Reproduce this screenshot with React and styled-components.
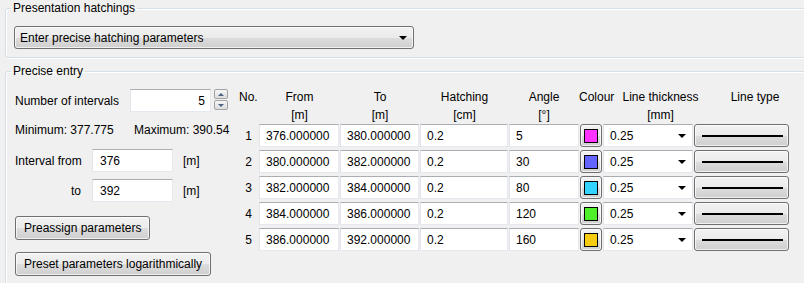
import React from 'react';
import styled, { createGlobalStyle, css } from 'styled-components';

const GlobalStyle = createGlobalStyle`
  html, body {
    margin: 0;
    padding: 0;
    background: #f0f0f0;
    overflow: hidden;
  }
  body {
    font-family: "Liberation Sans", Arial, sans-serif;
    font-size: 12px;
    color: #000;
  }
`

const Page = styled.div`
  width: 820px;
  height: 283px;
  padding-left: 5px;
  overflow: hidden;
`

const GroupBox = styled.fieldset`
  margin: ${p => p.$top || 0}px 0 0 0;
  padding: 0 0 ${p => p.$bottom || 0}px 5px;
  border: 1px solid #d5dfe5;
  border-radius: 3px;
  box-shadow: inset 1px 1px 0 #fff, 1px 1px 0 #fff;
  min-width: 0;
  height: ${p => p.$height ? p.$height + 'px' : 'auto'};
  box-sizing: border-box;
`

const Legend = styled.legend`
  padding: 0 2px;
  line-height: 16px;
  height: 16px;
`

const buttonFace = css`
  border: 1px solid #707070;
  border-radius: 3px;
  background: linear-gradient(#f2f2f2 0%, #ebebeb 50%, #dddddd 51%, #cfcfcf 100%);
  box-shadow: inset 0 0 0 1px rgba(255,255,255,0.7);
  box-sizing: border-box;
`

const Combo = styled.div`
  ${buttonFace}
  margin: 10px 0 0 3px;
  width: 400px;
  height: 23px;
  display: flex;
  align-items: center;
  justify-content: space-between;
  padding: 0 6px 0 5px;
`

const Arrow = styled.span`
  width: 0;
  height: 0;
  border-left: 4px solid transparent;
  border-right: 4px solid transparent;
  border-top: 4px solid #000;
`

const Body = styled.div`
  display: flex;
  padding-top: 9px;
  gap: 4px;
`

const LeftPanel = styled.div`
  width: 220px;
  padding-left: 4px;
  box-sizing: border-box;
  display: flex;
  flex-direction: column;
`

const FormRow = styled.div`
  display: flex;
  align-items: center;
  height: ${p => p.$h || 23}px;
  margin-top: ${p => p.$mt || 0}px;
`

const Label = styled.span`
  width: ${p => p.$w}px;
  padding-left: ${p => p.$pl || 0}px;
  box-sizing: border-box;
  flex-shrink: 0;
  white-space: nowrap;
`

const TextBox = styled.div`
  width: ${p => p.$w || 81}px;
  height: 23px;
  box-sizing: border-box;
  background: #fff;
  border: 1px solid #e3e9ef;
  border-top-color: #abadb3;
  border-left-color: #e2e3ea;
  display: flex;
  align-items: center;
  justify-content: ${p => p.$right ? 'flex-end' : 'flex-start'};
  padding: 0 ${p => p.$right ? 5 : 4}px 0 ${p => p.$right ? 0 : 7}px;
  flex-shrink: 0;
`

const Unit = styled.span`
  margin-left: 10px;
`

const Spinner = styled.div`
  display: flex;
  flex-direction: column;
  gap: 1px;
  margin-left: 3px;
  align-self: flex-start;
`

const SpinButton = styled.div`
  width: 14px;
  height: 10px;
  box-sizing: border-box;
  border: 1px solid #a3a3a3;
  border-radius: 2px;
  background: linear-gradient(#f6f6f6, #dcdcdc);
  display: flex;
  align-items: center;
  justify-content: center;
  &::after {
    content: "";
    border-left: 3px solid transparent;
    border-right: 3px solid transparent;
    ${p => p.$up ? 'border-bottom: 3px solid #4d6185;' : 'border-top: 3px solid #4d6185;'}
  }
`

const Stat = styled.span`
  width: ${p => p.$w}px;
  white-space: nowrap;
`

const PushButton = styled.div`
  ${buttonFace}
  height: 24px;
  display: inline-flex;
  align-items: center;
  padding: 0 8px;
  align-self: flex-start;
  margin-top: ${p => p.$mt}px;
  white-space: nowrap;
`

const Table = styled.div`
  display: flex;
  flex-direction: column;
`

const HeaderRow = styled.div`
  display: grid;
  grid-template-columns: 24px 81px 80px 89px 70px 40px 83px 106px;
  height: 36px;
  line-height: 18px;
`

const HeaderCell = styled.div`
  text-align: ${p => p.$align || 'center'};
  white-space: nowrap;
  padding-left: ${p => p.$pl || 0}px;
`

const Rows = styled.div`
  display: flex;
  flex-direction: column;
  gap: 3px;
`

const DataRow = styled.div`
  display: grid;
  grid-template-columns: 23px 80px 79px 88px 70px 22px 90px 95px;
  column-gap: 1px;
  height: 23px;
`

const RowNo = styled.div`
  display: flex;
  align-items: center;
  justify-content: center;
  padding-left: 4px;
`

const Cell = styled.div`
  box-sizing: border-box;
  background: #fff;
  border: 1px solid #e3e9ef;
  border-top-color: #abadb3;
  border-left-color: #e2e3ea;
  display: flex;
  align-items: center;
  padding-left: 6px;
`

const ColourButton = styled.div`
  ${buttonFace}
  display: flex;
  align-items: center;
  justify-content: center;
`

const Swatch = styled.span`
  width: 14px;
  height: 14px;
  box-sizing: border-box;
  border: 1px solid #000;
  background: ${p => p.$c};
`

const ThicknessCell = styled(Cell)`
  justify-content: space-between;
  padding-right: 6px;
`

const LineButton = styled.div`
  ${buttonFace}
  display: flex;
  align-items: center;
  justify-content: center;
  &::after {
    content: "";
    width: 81px;
    height: 2px;
    background: #000;
    margin-left: 1px;
  }
`

const rows = [
  { from: '376.000000', to: '380.000000', angle: '5', colour: '#ff33ff' },
  { from: '380.000000', to: '382.000000', angle: '30', colour: '#6464ff' },
  { from: '382.000000', to: '384.000000', angle: '80', colour: '#33d4ff' },
  { from: '384.000000', to: '386.000000', angle: '120', colour: '#4ff02a' },
  { from: '386.000000', to: '392.000000', angle: '160', colour: '#f7cb0f' },
];

export default function App() {
  return (
    <Page>
      <GlobalStyle />
      <GroupBox $bottom={8}>
        <Legend>Presentation hatchings</Legend>
        <Combo>
          <span>Enter precise hatching parameters</span>
          <Arrow />
        </Combo>
      </GroupBox>
      <GroupBox $top={5} $height={240}>
        <Legend>Precise entry</Legend>
        <Body>
          <LeftPanel>
            <FormRow $mt={1}>
              <Label $w={115}>Number of intervals</Label>
              <TextBox $right>5</TextBox>
              <Spinner>
                <SpinButton $up />
                <SpinButton />
              </Spinner>
            </FormRow>
            <FormRow $h={16} $mt={10}>
              <Stat $w={119}>Minimum: 377.775</Stat>
              <Stat>Maximum: 390.54</Stat>
            </FormRow>
            <FormRow $mt={11}>
              <Label $w={77}>Interval from</Label>
              <TextBox>376</TextBox>
              <Unit>[m]</Unit>
            </FormRow>
            <FormRow $mt={7}>
              <Label $w={77} $pl={56}>to</Label>
              <TextBox>392</TextBox>
              <Unit>[m]</Unit>
            </FormRow>
            <PushButton $mt={14}>Preassign parameters</PushButton>
            <PushButton $mt={12}>Preset parameters logarithmically</PushButton>
          </LeftPanel>
          <Table>
            <HeaderRow>
              <HeaderCell $align="left" $pl={4}>No.</HeaderCell>
              <HeaderCell>From<br />[m]</HeaderCell>
              <HeaderCell>To<br />[m]</HeaderCell>
              <HeaderCell>Hatching<br />[cm]</HeaderCell>
              <HeaderCell>Angle<br />[°]</HeaderCell>
              <HeaderCell $align="left">Colour</HeaderCell>
              <HeaderCell>Line thickness<br />[mm]</HeaderCell>
              <HeaderCell>Line type</HeaderCell>
            </HeaderRow>
            <Rows>
              {rows.map((r, i) => (
                <DataRow key={i}>
                  <RowNo>{i + 1}</RowNo>
                  <Cell>{r.from}</Cell>
                  <Cell>{r.to}</Cell>
                  <Cell>0.2</Cell>
                  <Cell>{r.angle}</Cell>
                  <ColourButton><Swatch $c={r.colour} /></ColourButton>
                  <ThicknessCell>
                    <span>0.25</span>
                    <Arrow />
                  </ThicknessCell>
                  <LineButton />
                </DataRow>
              ))}
            </Rows>
          </Table>
        </Body>
      </GroupBox>
    </Page>
  );
}
